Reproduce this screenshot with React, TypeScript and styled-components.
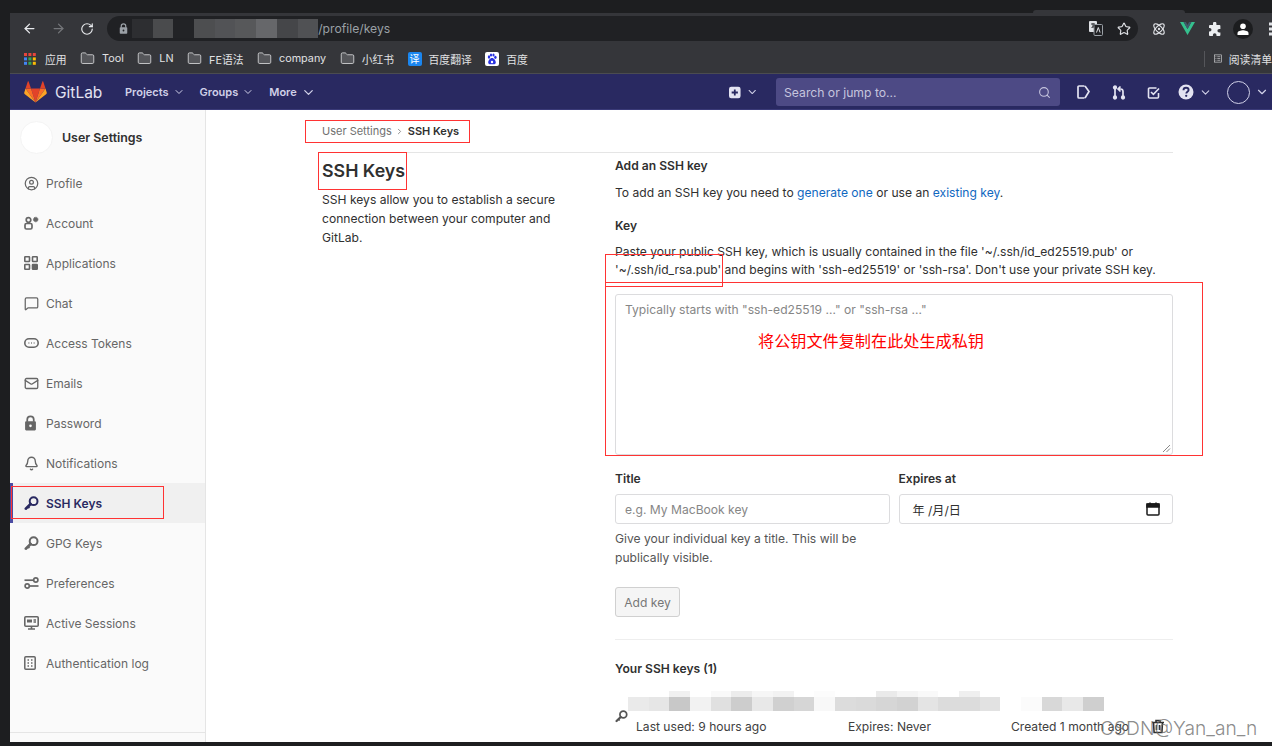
import styled, { createGlobalStyle } from 'styled-components';
import {
  ArrowLeft,
  ArrowRight,
  RotateCw,
  Star,
  Atom,
  Folder,
  ChevronDown,
  ChevronRight,
  Search,
  CircleUser,
  MessageSquare,
  Mail,
  Bell,
} from 'lucide-react';
import type { ReactNode } from 'react';

const UI_FONT = `Inter, "Liberation Sans", "Noto Sans CJK SC", sans-serif`;

const GlobalStyle = createGlobalStyle`
  html, body {
    margin: 0;
    padding: 0;
    background: #1d1e20;
  }
  * { box-sizing: border-box; }
`;

const Screen = styled.div`
  position: relative;
  width: 1272px;
  height: 746px;
  overflow: hidden;
  background: #1d1e20;
  font-family: ${UI_FONT};
  padding: 0 0 4px 10px;
  display: flex;
  flex-direction: column;
`;

/* browser chrome */
const TabStrip = styled.div`
  height: 13px;
  flex: none;
  display: flex;
  align-items: flex-end;
  padding-left: 1023px;
`;

const ActiveTab = styled.span`
  width: 152px;
  height: 3px;
  background: #35363a;
  border-radius: 4px 4px 0 0;
`;

const Toolbar = styled.div`
  height: 33px;
  flex: none;
  background: #35363a;
  display: flex;
  align-items: center;
  padding: 0 0 2px 12px;
  color: #dfe1e5;
`;

const ToolButton = styled.span<{ $dim?: boolean }>`
  width: 29px;
  flex: none;
  display: flex;
  justify-content: flex-start;
  color: ${(p) => (p.$dim ? '#74767a' : '#e8eaed')};
`;

const AddressBar = styled.div`
  margin-left: -2px;
  width: 1031px;
  flex: none;
  height: 25px;
  border-radius: 13px;
  background: #202124;
  display: flex;
  align-items: center;
  padding: 0 7px 0 12px;
  font-size: 12.2px;
  color: #9aa0a6;
`;

const LockSlot = styled.span`
  width: 13px;
  display: flex;
  color: #9aa0a6;
`;

const Blur = styled.div`
  display: flex;
  height: 19px;
`;

const BlurCell = styled.span<{ $shade: string }>`
  width: 20.7px;
  background: ${(p) => p.$shade};
`;

const AddressIcons = styled.div`
  margin-left: auto;
  display: flex;
  gap: 14px;
  align-items: center;
  color: #dfe1e5;
`;

const Extensions = styled.div`
  display: flex;
  flex: none;
  align-items: center;
  margin-left: 7px;
  color: #dfe1e5;
`;

const ExtensionSlot = styled.span`
  width: 28px;
  display: flex;
  justify-content: center;
`;

const ProfileDot = styled.span`
  width: 20px;
  height: 20px;
  border-radius: 50%;
  background: #1c1d1f;
  display: flex;
  align-items: center;
  justify-content: center;
`;

const Bookmarks = styled.div`
  height: 28px;
  flex: none;
  background: #35363a;
  border-bottom: 1px solid #4b4c50;
  display: flex;
  align-items: center;
  padding: 0 0 2px 14px;
  font-size: 10.8px;
  color: #e0e1e3;
`;

const Bookmark = styled.span<{ $gap?: number }>`
  display: flex;
  align-items: center;
  gap: ${(p) => p.$gap ?? 7}px;
  margin-right: 13.5px;
  white-space: nowrap;
`;

const ReadingList = styled.span`
  margin-left: auto;
  display: flex;
  align-items: center;
  gap: 7px;
  width: 68px;
  height: 16px;
  overflow: hidden;
  white-space: nowrap;
  border-left: 1px solid #55565a;
  padding-left: 9px;
`;

const TranslateBadge = styled.span`
  width: 14px;
  height: 14px;
  border-radius: 2px;
  background: #1a86f0;
  color: #fff;
  font-size: 10px;
  display: flex;
  align-items: center;
  justify-content: center;
`;

/* gitlab navbar */
const Navbar = styled.div`
  height: 36px;
  flex: none;
  background: #292961;
  border-bottom: 1px solid #3a3a78;
  display: flex;
  align-items: center;
  padding: 1px 0 0 14px;
  color: #d1d1e8;
`;

const Brand = styled.div`
  display: flex;
  align-items: center;
  gap: 8px;
  width: 101px;
  font-size: 15.5px;
  color: #e3e3f1;
`;

const NavLink = styled.span`
  display: flex;
  align-items: center;
  gap: 4px;
  font-size: 11px;
  font-weight: 600;
  margin-right: 15px;
`;

const NavRight = styled.div`
  margin-left: auto;
  display: flex;
  align-items: center;
`;

const NavIconGroup = styled.span<{ $w: number }>`
  width: ${(p) => p.$w}px;
  display: flex;
  align-items: center;
  gap: 5px;
`;

const SearchBox = styled.div`
  width: 284px;
  height: 28px;
  border-radius: 3px;
  background: #4d4a85;
  color: #c6c5de;
  font-size: 12.2px;
  display: flex;
  align-items: center;
  justify-content: space-between;
  padding: 0 9px 0 8px;
  margin: 0 17px 0 18px;
`;

const AvatarRing = styled.span`
  width: 23px;
  height: 23px;
  border-radius: 50%;
  border: 1px solid #d1d1e8;
`;

/* page body */
const Body = styled.div`
  flex: 1;
  min-height: 0;
  display: flex;
  background: #fff;
`;

const Sidebar = styled.aside`
  width: 196px;
  flex: none;
  background: #fafafa;
  border-right: 1px solid #e5e5e5;
  display: flex;
  flex-direction: column;
`;

const SidebarHead = styled.div`
  height: 53px;
  padding: 1px 0 0 10px;
  display: flex;
  align-items: center;
  gap: 9px;
  font-size: 12.4px;
  font-weight: 600;
  color: #303030;
`;

const SidebarAvatar = styled.span`
  width: 33px;
  height: 33px;
  border-radius: 50%;
  background: #fff;
  border: 1px solid #f4f4f4;
`;

const SideList = styled.div`
  display: flex;
  flex-direction: column;
`;

const SideItem = styled.div<{ $active?: boolean }>`
  height: 40px;
  display: flex;
  align-items: center;
  padding-left: ${(p) => (p.$active ? '11px' : '14px')};
  font-size: 12px;
  font-weight: ${(p) => (p.$active ? 600 : 400)};
  color: ${(p) => (p.$active ? '#292961' : '#666')};
  background: ${(p) => (p.$active ? '#f0f0f0' : 'transparent')};
  border-left: ${(p) => (p.$active ? '3px solid #4b4ba3' : '0')};
`;

const SideIcon = styled.span`
  width: 22px;
  flex: none;
  display: flex;
  align-items: center;
`;

const SideFoot = styled.div`
  margin-top: auto;
  height: 10px;
  border-top: 1px solid #e5e5e5;
`;

const Main = styled.main`
  flex: 1;
  min-width: 0;
  padding: 0 99px 0 116px;
  color: #303030;
  overflow: hidden;
`;

const Breadcrumb = styled.div`
  height: 43px;
  display: flex;
  align-items: center;
  gap: 3px;
  font-size: 11px;
  color: #707070;
  border-bottom: 1px solid #e5e5e5;
`;

const Crumb = styled.b`
  font-weight: 600;
  color: #303030;
  margin-left: 1px;
`;

const Columns = styled.div`
  display: flex;
`;

const Intro = styled.section`
  width: 293px;
  flex: none;
  padding-right: 48px;
`;

const Title = styled.h1`
  margin: 4px 0 0;
  font-size: 17.8px;
  line-height: 28px;
  font-weight: 600;
`;

const Lead = styled.p`
  margin: 5px 0 0;
  font-size: 12.1px;
  line-height: 19px;
`;

const FormCol = styled.section`
  flex: 1;
  min-width: 0;
`;

const Label = styled.div<{ $top: number }>`
  margin-top: ${(p) => p.$top}px;
  font-size: 12.1px;
  line-height: 18px;
  font-weight: 600;
`;

const Copy = styled.p<{ $top: number }>`
  margin: ${(p) => p.$top}px 0 0;
  font-size: 12.1px;
  line-height: 18px;
  white-space: nowrap;
`;

const Link = styled.a`
  color: #1068bf;
`;

const KeyArea = styled.div`
  position: relative;
  margin-top: 15px;
  height: 161px;
  border: 1px solid #dcdcde;
  border-radius: 3px;
  padding: 7px 9px;
  font-size: 12.1px;
  line-height: 16px;
  color: #868686;
`;

const ResizeGrip = styled.svg`
  position: absolute;
  right: 1px;
  bottom: 1px;
`;

const FieldRow = styled.div`
  display: flex;
  gap: 9px;
  margin-top: 15px;
`;

const Field = styled.div`
  flex: 1;
`;

const Input = styled.div`
  margin-top: 6px;
  height: 30px;
  border: 1px solid #dcdcde;
  border-radius: 3px;
  padding: 0 12px 0 9px;
  display: flex;
  align-items: center;
  justify-content: space-between;
  font-size: 12.1px;
  color: #868686;
`;

const DateValue = styled.span`
  color: #303030;
  padding-left: 4px;
`;

const Hint = styled.p`
  margin: 5px 0 0;
  font-size: 12.1px;
  line-height: 19px;
  color: #555;
`;

const AddButton = styled.div`
  margin-top: 20px;
  width: 65px;
  height: 30px;
  border: 1px solid #d0d0d0;
  border-radius: 3px;
  background: #f5f5f5;
  color: #777;
  font-size: 12.1px;
  display: flex;
  align-items: center;
  justify-content: center;
`;

const Divider = styled.hr`
  margin: 22px 0 0;
  border: 0;
  border-top: 1px solid #eee;
`;

const KeysHeading = styled.div`
  margin-top: 20px;
  font-size: 12.1px;
  line-height: 18px;
  font-weight: 600;
`;

const KeyRow = styled.div`
  margin-top: 13px;
  display: flex;
`;

const KeyIconCol = styled.div`
  width: 21px;
  padding-top: 16px;
  color: #555;
  flex: none;
`;

const KeyInfo = styled.div`
  flex: 1;
  min-width: 0;
`;

const KeyPixelRow = styled.div<{ $h: number }>`
  display: flex;
  height: ${(p) => p.$h}px;
  margin-left: -8px;
`;

const KeyMeta = styled.div`
  display: flex;
  margin-top: 8px;
  font-size: 12.1px;
  line-height: 16px;
  white-space: nowrap;
  color: #404040;
`;

const MetaCell = styled.span<{ $w: number }>`
  width: ${(p) => p.$w}px;
  flex: none;
`;

const DeleteIcon = styled.span`
  margin-left: 18px;
  display: flex;
  color: #303030;
`;

/* annotations drawn on top of the screenshot */
const RedBox = styled.div<{ $x: number; $y: number; $w: number; $h: number }>`
  position: absolute;
  left: ${(p) => p.$x}px;
  top: ${(p) => p.$y}px;
  width: ${(p) => p.$w}px;
  height: ${(p) => p.$h}px;
  border: 1px solid #f33;
  pointer-events: none;
`;

const RedNote = styled.div`
  position: absolute;
  left: 758px;
  top: 330px;
  font-size: 16.15px;
  line-height: 20px;
  color: #f00;
  font-family: "Noto Sans CJK SC", sans-serif;
`;

const Watermark = styled.div`
  position: absolute;
  left: 1100px;
  top: 716px;
  font-size: 19.2px;
  line-height: 24px;
  font-weight: 300;
  color: rgba(110, 110, 110, 0.8);
  white-space: nowrap;
`;

function AppsGrid() {
  const colors = ['#e8453c', '#e8453c', '#e8453c', '#4285f4', '#34a853', '#fbbc05', '#4285f4', '#34a853', '#fbbc05'];
  return (
    <svg width="12" height="12" viewBox="0 0 12 12">
      {colors.map((c, i) => (
        <rect key={i} x={(i % 3) * 4.4} y={Math.floor(i / 3) * 4.4} width="3" height="3" fill={c} />
      ))}
    </svg>
  );
}

function FolderIcon() {
  return <Folder size={15} strokeWidth={1.5} fill="#55565a" color="#c9cacc" />;
}

function BaiduIcon() {
  return (
    <svg width="14" height="14" viewBox="0 0 14 14">
      <rect width="14" height="14" rx="2" fill="#fff" />
      <ellipse cx="4" cy="5" rx="1.2" ry="1.7" fill="#2932e1" />
      <ellipse cx="6" cy="3" rx="1.1" ry="1.6" fill="#2932e1" />
      <ellipse cx="8.5" cy="3" rx="1.1" ry="1.6" fill="#2932e1" />
      <ellipse cx="10.4" cy="5.3" rx="1.2" ry="1.6" fill="#2932e1" />
      <path d="M7 6c-2 0-3.800 2.600-3.800 4.400C3.200 12 4.600 12.400 7 12.200c2.400.2 3.800-.2 3.800-1.800C10.800 8.600 9 6 7 6z" fill="#2932e1" />
      <circle cx="7" cy="10" r="1.2" fill="#fff" />
    </svg>
  );
}

function VueMark() {
  return (
    <svg width="15" height="13" viewBox="0 0 15 13">
      <path d="M0 0h3.600l3.900 7 3.900-7H15L7.500 13z" fill="#35c08e" />
      <path d="M3.600 0h2.300l1.600 3 1.600-3h2.300L7.500 7z" fill="#3f5a6c" />
    </svg>
  );
}

function TranslateIcon() {
  return (
    <svg width="14" height="15" viewBox="0 0 14 15">
      <rect x="0" y="0" width="8" height="11" rx="1" fill="#dfe1e5" />
      <rect x="5" y="3.500" width="8.500" height="11" rx="1" fill="#202124" stroke="#9aa0a6" />
      <path d="M2 3h4M4 2v5M2.500 7 5.500 4" stroke="#35363a" fill="none" />
      <path d="M7.500 11.500 9.300 6.500l1.800 5" stroke="#dfe1e5" fill="none" />
    </svg>
  );
}

function PuzzleMark() {
  return (
    <svg width="14" height="14" viewBox="0 0 14 14" fill="#eceef1">
      <path d="M5 1.500a1.700 1.700 0 0 1 3.400 0V3h3a1 1 0 0 1 1 1v3h-1.200a1.800 1.800 0 0 0 0 3.600h1.200V13a1 1 0 0 1-1 1H8.500v-1a1.800 1.800 0 0 0-3.600 0v1H2a1 1 0 0 1-1-1V9.500h.7a1.800 1.800 0 0 0 0-3.600H1V4a1 1 0 0 1 1-1h3z" />
    </svg>
  );
}

function ProfileMark() {
  return (
    <svg width="12" height="12" viewBox="0 0 12 12" fill="#fff">
      <circle cx="6" cy="3.300" r="2.800" />
      <path d="M.5 12V10c0-1.800 3.500-2.800 5.500-2.800s5.500 1 5.500 2.800v2z" />
    </svg>
  );
}

function MenuDots() {
  return (
    <svg width="4" height="14" viewBox="0 0 4 14" fill="#dfe1e5">
      <rect x="0" y="0.500" width="3.400" height="3" />
      <rect x="0" y="5.500" width="3.400" height="3" />
      <rect x="0" y="10.500" width="3.400" height="3" />
    </svg>
  );
}

function LockMark({ size, color }: { size: number; color: string }) {
  return (
    <svg width={size} height={size * 1.2} viewBox="0 0 12 14" fill="none">
      <path d="M3 6V4a3 3 0 0 1 6 0v2" stroke={color} strokeWidth="1.600" />
      <path fillRule="evenodd" d="M2 5.500h8a1 1 0 0 1 1 1V13a1 1 0 0 1-1 1H2a1 1 0 0 1-1-1V6.500a1 1 0 0 1 1-1zM6 8.600a1.200 1.200 0 1 0 0 2.400 1.200 1.200 0 0 0 0-2.400z" fill={color} />
    </svg>
  );
}

function ReadingIcon() {
  return (
    <svg width="13" height="13" viewBox="0 0 13 13" fill="none" stroke="#e0e1e3">
      <rect x=".5" y=".5" width="12" height="12" />
      <path d="M2.500 3.500h1.500M5.500 3.500h5M2.500 6.500h1.500M5.500 6.500h5M2.500 9.500h1.500M5.500 9.500h5" />
    </svg>
  );
}

function Tanuki() {
  return (
    <svg width="23" height="22" viewBox="0 0 23 22">
      <path d="M11.500 21.500 L16 7.500 H7z" fill="#e24329" />
      <path d="M11.500 21.500 L7 7.500 H1.500z" fill="#fc6d26" />
      <path d="M1.500 7.500 L.2 11.800c-.1.400 0 .8.400 1.100l10.900 8.600z" fill="#fca326" />
      <path d="M1.500 7.500H7L4.600.6c-.1-.4-.7-.4-.8 0z" fill="#e24329" />
      <path d="M11.500 21.500 L16 7.500h5.500z" fill="#fc6d26" />
      <path d="M21.500 7.500l1.300 4.300c.1.400 0 .8-.4 1.100l-10.900 8.600z" fill="#fca326" />
      <path d="M21.500 7.500H16L18.400.6c.1-.4.700-.4.800 0z" fill="#e24329" />
    </svg>
  );
}

function PlusSquare() {
  return (
    <svg width="13" height="13" viewBox="0 0 13 13">
      <rect width="13" height="13" rx="2.500" fill="#e3e3f1" />
      <path d="M6.500 3v7M3 6.500h7" stroke="#292961" strokeWidth="2" />
    </svg>
  );
}

function IssuesIcon() {
  return (
    <svg width="13" height="14" viewBox="0 0 13 14" fill="none" stroke="#e3e3f1" strokeWidth="1.700">
      <path d="M7.500 1H2a1 1 0 0 0-1 1v10a1 1 0 0 0 1 1h5.500M8 1l4 5.500L8 13" />
    </svg>
  );
}

function MergeIcon() {
  return (
    <svg width="14" height="15" viewBox="0 0 14 15" fill="none" stroke="#e3e3f1" strokeWidth="1.700">
      <path d="M3 3.500v8" />
      <circle cx="3" cy="2.500" r="1.300" fill="#e3e3f1" />
      <circle cx="3" cy="12.500" r="1.300" fill="#e3e3f1" />
      <path d="M11 11.500V6.500a2.500 2.500 0 0 0-2.500-2.500H7M8.500 1.500 6 4l2.500 2.500" />
      <circle cx="11" cy="12.500" r="1.300" fill="#e3e3f1" />
    </svg>
  );
}

function TodoIcon() {
  return (
    <svg width="13" height="13" viewBox="0 0 13 13" fill="none" stroke="#e3e3f1" strokeWidth="1.600">
      <path d="M11.500 7v4a1 1 0 0 1-1 1h-8a1 1 0 0 1-1-1V3a1 1 0 0 1 1-1h7" />
      <path d="M4 6l2.400 2.400L12 2.500" />
    </svg>
  );
}

function HelpIcon() {
  return (
    <svg width="16" height="16" viewBox="0 0 16 16">
      <circle cx="8" cy="8" r="7.500" fill="#e3e3f1" />
      <path d="M5.500 6.200c0-1.500 1.100-2.400 2.600-2.400s2.500.9 2.500 2.100c0 1.800-2.300 1.800-2.300 3.500" fill="none" stroke="#292961" strokeWidth="1.900" />
      <circle cx="8.200" cy="11.800" r="1.150" fill="#292961" />
    </svg>
  );
}

function KeyIcon({ size = 15 }: { size?: number }) {
  return (
    <svg width={size} height={size} viewBox="0 0 15 15" fill="none">
      <circle cx="9.600" cy="5.200" r="3.900" stroke="currentColor" strokeWidth="2" />
      <path d="M6.600 8 1.800 12.700" stroke="currentColor" strokeWidth="2.600" strokeLinecap="round" />
      <path d="M4 10.700l1.400 1.400" stroke="currentColor" strokeWidth="1.800" />
    </svg>
  );
}

function AccountIcon() {
  return (
    <svg width="15" height="14" viewBox="0 0 15 14" fill="none" stroke="currentColor" strokeWidth="1.700">
      <circle cx="4.500" cy="4" r="2.300" />
      <rect x="1" y="7.500" width="7" height="5.500" rx="1.500" />
      <circle cx="11.700" cy="3.500" r="2.300" fill="currentColor" strokeWidth=".9" strokeDasharray="1 .6" />
    </svg>
  );
}

function AppsIcon() {
  return (
    <svg width="14" height="14" viewBox="0 0 14 14" fill="none" stroke="currentColor" strokeWidth="1.600">
      <rect x=".8" y=".8" width="4.700" height="4.700" rx=".5" />
      <rect x="8.500" y=".8" width="4.700" height="4.700" rx=".5" />
      <rect x=".8" y="8.500" width="4.700" height="4.700" rx=".5" />
      <rect x="8.500" y="8.500" width="4.700" height="4.700" rx=".5" fill="currentColor" />
    </svg>
  );
}

function TokenIcon() {
  return (
    <svg width="15" height="10" viewBox="0 0 15 10" fill="none" stroke="currentColor" strokeWidth="1.600">
      <rect x=".8" y=".8" width="13.400" height="8.400" rx="4.200" />
      <path d="M4.500 5h.8M7.100 5h.8M9.700 5h.8" />
    </svg>
  );
}

function SlidersIcon() {
  return (
    <svg width="15" height="12" viewBox="0 0 15 12" fill="none" stroke="currentColor" strokeWidth="1.700">
      <path d="M.5 3.200H9" />
      <circle cx="11.800" cy="3" r="2.100" />
      <path d="M6 9h8.500" />
      <circle cx="3.200" cy="9" r="2.100" />
    </svg>
  );
}

function SessionIcon() {
  return (
    <svg width="15" height="14" viewBox="0 0 15 14" fill="none" stroke="currentColor" strokeWidth="1.600">
      <rect x=".8" y=".8" width="13.400" height="9.400" rx="1" />
      <rect x="3" y="3.500" width="5" height="3" fill="currentColor" stroke="none" />
      <path d="M9.500 4h2.500M9.500 6h2.500M7.500 10.500V13M4 13h7" />
    </svg>
  );
}

function LogIcon() {
  return (
    <svg width="12" height="14" viewBox="0 0 12 14" fill="none" stroke="currentColor" strokeWidth="1.500">
      <rect x=".8" y=".8" width="10.400" height="12.400" rx="1" />
      <path d="M3.500 4h1.500M7 4h1.500M3.500 7h1.500M7 7h1.500M3.500 10h1.500M7 10h1.500" />
    </svg>
  );
}

function TrashIcon() {
  return (
    <svg width="14" height="15" viewBox="0 0 14 15" fill="none" stroke="currentColor" strokeWidth="1.600">
      <path d="M1 3.500h12M5 3.500V1.500h4v2M2.500 3.500l.6 10h7.800l.6-10M5.500 6v5M8.500 6v5" />
    </svg>
  );
}

function CalendarIcon() {
  return (
    <svg width="14" height="14" viewBox="0 0 14 14" fill="none" stroke="#1a1a1a" strokeWidth="1.500">
      <rect x="1" y="2" width="12" height="11" rx="1" />
      <rect x="1" y="2" width="12" height="3" fill="#1a1a1a" />
      <path d="M4 .5v2M10 .5v2" />
    </svg>
  );
}

type SideEntry = { label: string; icon: ReactNode; active?: boolean };

const sideEntries: SideEntry[] = [
  { label: 'Profile', icon: <CircleUser size={15} strokeWidth={2} /> },
  { label: 'Account', icon: <AccountIcon /> },
  { label: 'Applications', icon: <AppsIcon /> },
  { label: 'Chat', icon: <MessageSquare size={15} strokeWidth={2} /> },
  { label: 'Access Tokens', icon: <TokenIcon /> },
  { label: 'Emails', icon: <Mail size={15} strokeWidth={2.1} /> },
  { label: 'Password', icon: <LockMark size={13} color="currentColor" /> },
  { label: 'Notifications', icon: <Bell size={15} strokeWidth={2.2} /> },
  { label: 'SSH Keys', icon: <KeyIcon />, active: true },
  { label: 'GPG Keys', icon: <KeyIcon /> },
  { label: 'Preferences', icon: <SlidersIcon /> },
  { label: 'Active Sessions', icon: <SessionIcon /> },
  { label: 'Authentication log', icon: <LogIcon /> },
];

const urlBlur = ['#2d2e31', '#4a4b4d', '#222326', '#4d4e50', '#525356', '#57585a', '#66676a', '#454649', '#505154'];
const keyTop = ['#fff', '#fff', '#f0f0f0', '#fff', '#f9f9f9', '#ececec', '#f6f6f6', '#f2f2f2', '#fff', '#fcfcfc', '#fff', '#fff', '#eaeaea', '#f4f4f4', '#f9f9f9', '#fff', '#efefef', '#fff'];
const keyBottom = ['#eaeaea', '#e6e6e6', '#c8c8c8', '#f2f2f2', '#e0e0e0', '#cdcdcd', '#e8e8e8', '#d0d0d0', '#d6d6d6', '#f8f8f8', '#dcdcdc', '#dadada', '#d6d6d6', '#d2d2d2', '#e4e4e4', '#dcdcdc', '#dcdcdc', '#e2e2e2', '#fff', '#fbfbfb', '#d8d8d8', '#e8e8e8', '#cfcfcf'];

export default function App() {
  return (
    <Screen>
      <GlobalStyle />
      <TabStrip><ActiveTab /></TabStrip>
      <Toolbar>
        <ToolButton><ArrowLeft size={15} /></ToolButton>
        <ToolButton $dim><ArrowRight size={15} /></ToolButton>
        <ToolButton><RotateCw size={14} /></ToolButton>
        <AddressBar>
          <LockSlot><LockMark size={9} color="#9aa0a6" /></LockSlot>
          <Blur>
            {urlBlur.map((shade, i) => (
              <BlurCell key={i} $shade={shade} />
            ))}
          </Blur>
          <span>/profile/keys</span>
          <AddressIcons>
            <TranslateIcon />
            <Star size={14} />
          </AddressIcons>
        </AddressBar>
        <Extensions>
          <ExtensionSlot><Atom size={14} /></ExtensionSlot>
          <ExtensionSlot><VueMark /></ExtensionSlot>
          <ExtensionSlot><PuzzleMark /></ExtensionSlot>
          <ExtensionSlot><ProfileDot><ProfileMark /></ProfileDot></ExtensionSlot>
          <ExtensionSlot><MenuDots /></ExtensionSlot>
        </Extensions>
      </Toolbar>
      <Bookmarks>
        <Bookmark $gap={9}><AppsGrid />应用</Bookmark>
        <Bookmark><FolderIcon />Tool</Bookmark>
        <Bookmark><FolderIcon />LN</Bookmark>
        <Bookmark><FolderIcon />FE语法</Bookmark>
        <Bookmark><FolderIcon />company</Bookmark>
        <Bookmark><FolderIcon />小红书</Bookmark>
        <Bookmark><TranslateBadge>译</TranslateBadge>百度翻译</Bookmark>
        <Bookmark><BaiduIcon />百度</Bookmark>
        <ReadingList><ReadingIcon />阅读清单</ReadingList>
      </Bookmarks>
      <Navbar>
        <Brand><Tanuki />GitLab</Brand>
        <NavLink>Projects <ChevronDown size={12} /></NavLink>
        <NavLink>Groups <ChevronDown size={12} /></NavLink>
        <NavLink>More <ChevronDown size={15} /></NavLink>
        <NavRight>
          <NavIconGroup $w={29}><PlusSquare /><ChevronDown size={14} /></NavIconGroup>
          <SearchBox>Search or jump to...<Search size={13} /></SearchBox>
          <NavIconGroup $w={35}><IssuesIcon /></NavIconGroup>
          <NavIconGroup $w={35}><MergeIcon /></NavIconGroup>
          <NavIconGroup $w={31}><TodoIcon /></NavIconGroup>
          <NavIconGroup $w={49}><HelpIcon /><ChevronDown size={13} /></NavIconGroup>
          <NavIconGroup $w={45}><AvatarRing /><ChevronDown size={14} /></NavIconGroup>
        </NavRight>
      </Navbar>
      <Body>
        <Sidebar>
          <SidebarHead><SidebarAvatar />User Settings</SidebarHead>
          <SideList>
            {sideEntries.map((entry) => (
              <SideItem key={entry.label} $active={entry.active}>
                <SideIcon>{entry.icon}</SideIcon>
                {entry.label}
              </SideItem>
            ))}
          </SideList>
          <SideFoot />
        </Sidebar>
        <Main>
          <Breadcrumb>
            User Settings
            <ChevronRight size={9} />
            <Crumb>SSH Keys</Crumb>
          </Breadcrumb>
          <Columns>
            <Intro>
              <Title>SSH Keys</Title>
              <Lead>SSH keys allow you to establish a secure connection between your computer and GitLab.</Lead>
            </Intro>
            <FormCol>
              <Label $top={4}>Add an SSH key</Label>
              <Copy $top={9}>
                To add an SSH key you need to <Link>generate one</Link> or use an <Link>existing key</Link>.
              </Copy>
              <Label $top={15}>Key</Label>
              <Copy $top={8}>
                Paste your public SSH key, which is usually contained in the file '~/.ssh/id_ed25519.pub' or
                <br />
                '~/.ssh/id_rsa.pub' and begins with 'ssh-ed25519' or 'ssh-rsa'. Don't use your private SSH key.
              </Copy>
              <KeyArea>
                Typically starts with "ssh-ed25519 …" or "ssh-rsa …"
                <ResizeGrip width="9" height="9" viewBox="0 0 9 9" stroke="#888">
                  <path d="M1 8 8 1M4.500 8 8 4.500" />
                </ResizeGrip>
              </KeyArea>
              <FieldRow>
                <Field>
                  <Label $top={0}>Title</Label>
                  <Input>e.g. My MacBook key</Input>
                </Field>
                <Field>
                  <Label $top={0}>Expires at</Label>
                  <Input>
                    <DateValue>年 /月/日</DateValue>
                    <CalendarIcon />
                  </Input>
                </Field>
              </FieldRow>
              <Hint>
                Give your individual key a title. This will be
                <br />
                publically visible.
              </Hint>
              <AddButton>Add key</AddButton>
              <Divider />
              <KeysHeading>Your SSH keys (1)</KeysHeading>
              <KeyRow>
                <KeyIconCol><KeyIcon size={13} /></KeyIconCol>
                <KeyInfo>
                  <KeyPixelRow $h={6}>
                    {keyTop.map((shade, i) => (
                      <BlurCell key={i} $shade={shade} />
                    ))}
                  </KeyPixelRow>
                  <KeyPixelRow $h={14}>
                    {keyBottom.map((shade, i) => (
                      <BlurCell key={i} $shade={shade} />
                    ))}
                  </KeyPixelRow>
                  <KeyMeta>
                    <MetaCell $w={212}>Last used: 9 hours ago</MetaCell>
                    <MetaCell $w={163}>Expires: Never</MetaCell>
                    <MetaCell $w={122}>Created 1 month ago</MetaCell>
                    <DeleteIcon><TrashIcon /></DeleteIcon>
                  </KeyMeta>
                </KeyInfo>
              </KeyRow>
            </FormCol>
          </Columns>
        </Main>
      </Body>
      <RedBox $x={305} $y={120} $w={165} $h={23} />
      <RedBox $x={318} $y={152} $w={89} $h={38} />
      <RedBox $x={11} $y={486} $w={153} $h={33} />
      <RedBox $x={605} $y={254} $w={118} $h={33} />
      <RedBox $x={605} $y={282} $w={598} $h={174} />
      <RedNote>将公钥文件复制在此处生成私钥</RedNote>
      <Watermark>CSDN@Yan_an_n</Watermark>
    </Screen>
  );
}
